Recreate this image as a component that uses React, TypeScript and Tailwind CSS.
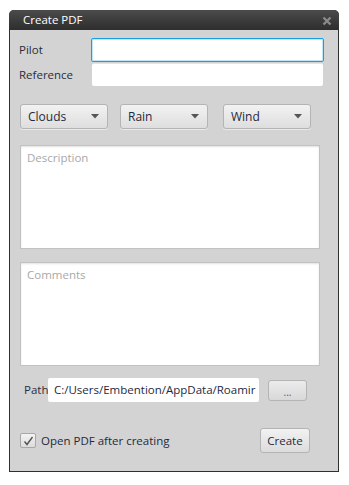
import React from "react";

const font = { fontFamily: '"Open Sans", "Noto Sans", sans-serif' };

function Dropdown({ label, ml }: { label: string; ml: string }) {
  return (
    <div
      className={`${ml} w-[88px] h-[25px] rounded-[3px] border border-[#b4b4b4] bg-gradient-to-b from-[#f2f2f2] to-[#dedede] flex items-center justify-between pl-[7px] pr-[8px] text-[12px] text-[#1f2940] shadow-[0_1px_0_rgba(255,255,255,0.5)]`}
    >
      <span>{label}</span>
      <svg width="8" height="5" viewBox="0 0 8 5">
        <polygon points="0,0 8,0 4,4.5" fill="#555" />
      </svg>
    </div>
  );
}

export default function App() {
  return (
    <div className="w-[349px] h-[485px] bg-white pt-[10px] pl-[9px]" style={font}>
      <div className="w-[330px] h-[462px] rounded-t-[5px] bg-[#2f2f2f] flex flex-col overflow-hidden">
        <div className="h-[20px] bg-gradient-to-b from-[#4b4b4b] to-[#2e2e2e] flex items-center justify-between pl-[14px] pr-[7px]">
          <span className="text-white text-[11.5px] leading-none">Create PDF</span>
          <svg width="10" height="10" viewBox="0 0 10 10" className="mt-[1px]">
            <path d="M1.5 1.5 L8.5 8.5 M8.5 1.5 L1.5 8.5" stroke="#8a8a8a" strokeWidth="2.4" strokeLinecap="butt" />
          </svg>
        </div>
        <div className="flex-1 mx-[1px] mb-[1px] bg-[#d3d3d3] flex flex-col pl-[9px] text-[#2a2d3c] text-[11.5px]">
          <div className="flex items-center mt-[8px]">
            <span className="w-[72px]">Pilot</span>
            <div className="w-[233px] h-[24px] bg-white rounded-[2px] border border-[#1b9ee0] shadow-[inset_0_0_0_1px_#bfe6f7]"></div>
          </div>
          <div className="flex items-center mt-[1px]">
            <span className="w-[73px]">Reference</span>
            <div className="w-[231px] h-[23px] bg-white rounded-[2px] border-t border-[#e4e4e4]"></div>
          </div>
          <div className="flex items-center mt-[18px]">
            <Dropdown label="Clouds" ml="ml-[1px]" />
            <Dropdown label="Rain" ml="ml-[12px]" />
            <Dropdown label="Wind" ml="ml-[15px]" />
          </div>
          <div className="ml-[1px] mt-[16px] w-[300px] h-[104px] bg-white border border-[#c2c2c2] shadow-[inset_0_1px_2px_rgba(0,0,0,0.12)] px-[6px] pt-[3px] text-[#a8a8a8]">
            Description
          </div>
          <div className="ml-[1px] mt-[13px] w-[300px] h-[104px] bg-white border border-[#c2c2c2] shadow-[inset_0_1px_2px_rgba(0,0,0,0.12)] px-[6px] pt-[3px] text-[#a8a8a8]">
            Comments
          </div>
          <div className="flex items-center mt-[12px]">
            <span className="ml-[5px] w-[24px]">Path</span>
            <div className="w-[211px] h-[24px] bg-white rounded-[2px] flex items-center pl-[6px] overflow-hidden whitespace-nowrap text-[#1f2940]">
              C:/Users/Embention/AppData/Roamir
            </div>
            <div className="ml-[9px] w-[39px] h-[21px] rounded-[3px] border border-[#b4b4b4] bg-gradient-to-b from-[#ececec] to-[#d8d8d8] flex items-end justify-center pb-[3px] text-[10px] leading-none text-[#555]">
              ...
            </div>
          </div>
          <div className="flex items-center mt-[26px]">
            <div className="ml-[1px] w-[16px] h-[15px] rounded-[2px] border border-[#a8a8a8] bg-gradient-to-b from-[#f4f4f4] to-[#dcdcdc] flex items-center justify-center">
              <svg width="11" height="10" viewBox="0 0 11 10">
                <path d="M1.5 5.5 L4 8.5 L9.5 1" stroke="#555" strokeWidth="1.4" fill="none" />
              </svg>
            </div>
            <span className="ml-[5px] text-[#1f2940]">Open PDF after creating</span>
            <div className="ml-auto mr-[28px] w-[50px] h-[25px] rounded-[3px] border border-[#b4b4b4] bg-gradient-to-b from-[#f2f2f2] to-[#dcdcdc] flex items-center justify-center text-[#1f2940]">
              Create
            </div>
          </div>
        </div>
      </div>
    </div>
  );
}
